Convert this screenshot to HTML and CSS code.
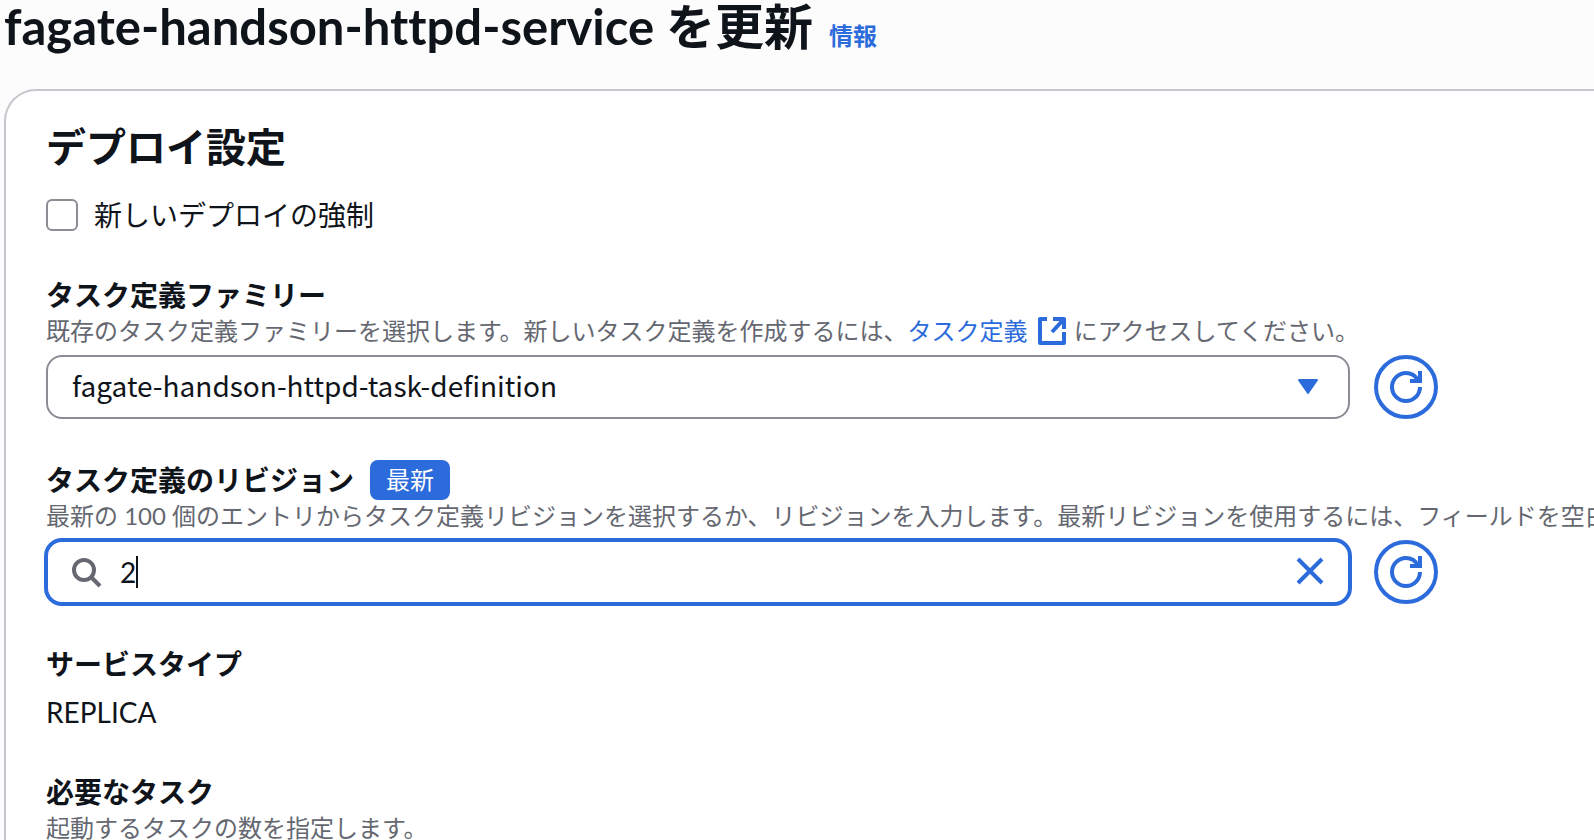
FILE: index.html
```html
<!DOCTYPE html>
<html lang="ja">
<head>
  <meta charset="utf-8">
  <meta name="viewport" content="width=device-width, initial-scale=1">
  <title>fagate-handson-httpd-service を更新</title>
  <link rel="stylesheet" href="styles.css">
</head>
<body>
  <header class="page-header">
    <h1 class="page-title">fagate-handson-httpd-service を更新</h1>
    <a class="info-link" href="#info">情報</a>
  </header>

  <main class="card">
    <h2 class="card-title">デプロイ設定</h2>

    <form class="form">
      <label class="check">
        <input class="check-box" type="checkbox">
        <span>新しいデプロイの強制</span>
      </label>

      <div class="field">
        <label class="field-label" for="family">タスク定義ファミリー</label>
        <p class="field-hint">既存のタスク定義ファミリーを選択します。新しいタスク定義を作成するには、<a class="link" href="#task-definitions">タスク定義<svg class="external-icon" viewBox="0 0 32 32" aria-hidden="true"><path d="M11 4H4v24h24V17M17 4h11v10M28 4L16 17" fill="none" stroke="currentColor" stroke-width="4" stroke-linejoin="round"/></svg></a> にアクセスしてください。</p>
        <div class="control-row">
          <div class="select-wrap">
            <select class="select" id="family">
              <option>fagate-handson-httpd-task-definition</option>
            </select>
            <svg class="select-arrow" viewBox="0 0 32 32" aria-hidden="true"><path d="M7 9h18l-9 13z" fill="currentColor" stroke="currentColor" stroke-width="2" stroke-linejoin="round"/></svg>
          </div>
          <button class="refresh" type="button" aria-label="ファミリーを再読み込み">
            <svg class="icon" viewBox="0 0 32 32" aria-hidden="true"><path d="M30 16A14 14 0 1 1 16 2C21 2 25 4 28 9M30 0v10H20" fill="none" stroke="currentColor" stroke-width="4"/></svg>
          </button>
        </div>
      </div>

      <div class="field">
        <div class="label-row">
          <label class="field-label" for="revision">タスク定義のリビジョン</label>
          <span class="badge">最新</span>
        </div>
        <p class="field-hint">最新の 100 個のエントリからタスク定義リビジョンを選択するか、リビジョンを入力します。最新リビジョンを使用するには、フィールドを空白のままにします。</p>
        <div class="control-row">
          <div class="search">
            <svg class="icon search-icon" viewBox="0 0 32 32" aria-hidden="true"><circle cx="12" cy="14" r="10" fill="none" stroke="currentColor" stroke-width="4"/><path d="M19 21l9 9" stroke="currentColor" stroke-width="4"/></svg>
            <div class="search-text">
              <input class="search-input" id="revision" type="text" value="2">
              <span class="caret"></span>
            </div>
            <button class="clear" type="button" aria-label="クリア">
              <svg class="icon" viewBox="0 0 32 32" aria-hidden="true"><path d="M4 3l24 24M28 3L4 27" fill="none" stroke="currentColor" stroke-width="4"/></svg>
            </button>
          </div>
          <button class="refresh" type="button" aria-label="リビジョンを再読み込み">
            <svg class="icon" viewBox="0 0 32 32" aria-hidden="true"><path d="M30 16A14 14 0 1 1 16 2C21 2 25 4 28 9M30 0v10H20" fill="none" stroke="currentColor" stroke-width="4"/></svg>
          </button>
        </div>
      </div>

      <div class="field">
        <div class="field-label">サービスタイプ</div>
        <div class="field-value">REPLICA</div>
      </div>

      <div class="field">
        <div class="field-label">必要なタスク</div>
        <p class="field-hint">起動するタスクの数を指定します。</p>
      </div>
    </form>
  </main>
</body>
</html>
```

FILE: styles.css
```css
:root {
  --text: #0f141a;
  --muted: #656871;
  --blue: #2c6bdb;
  --border: #c6c6cd;
  --control: #8c8c94;
}

* {
  box-sizing: border-box;
}

html {
  overflow: hidden;
}

body {
  margin: 0;
  padding-left: 4px;
  background: #fcfcfd;
  color: var(--text);
  font-family: Lato, "Noto Sans CJK JP", sans-serif;
  font-size: 28px;
  line-height: 40px;
}

h1,
h2,
p {
  margin: 0;
}

.page-header {
  display: flex;
  align-items: baseline;
  gap: 16px;
  margin-bottom: 36px;
  white-space: nowrap;
}

.page-title {
  font-size: 49px;
  line-height: 53px;
  font-weight: 700;
  font-variant-ligatures: none;
}

.info-link {
  color: var(--blue);
  font-size: 24px;
  line-height: 32px;
  font-weight: 700;
  text-decoration: none;
}

.card {
  padding: 32px 0 40px 40px;
  border: 2px solid var(--border);
  border-right: 0;
  border-radius: 32px 0 0 32px;
  background: #fff;
  overflow: hidden;
}

.card-title {
  margin-bottom: 24px;
  font-size: 40px;
  line-height: 48px;
  font-weight: 700;
}

.form {
  display: flex;
  flex-direction: column;
  gap: 40px;
}

.check {
  display: flex;
  align-items: center;
  gap: 16px;
}

.check-box {
  appearance: none;
  width: 32px;
  height: 32px;
  margin: 0;
  border: 2px solid var(--control);
  border-radius: 6px;
  background: #fff;
}

.field-label {
  display: block;
  font-weight: 700;
}

.label-row {
  display: flex;
  align-items: center;
  gap: 16px;
  padding-top: 1px;
}

.badge {
  padding: 0 16px;
  border-radius: 8px;
  background: var(--blue);
  color: #fff;
  font-size: 24px;
}

.field-hint {
  color: var(--muted);
  font-size: 24px;
  line-height: 32px;
  white-space: nowrap;
}

.field-value {
  margin-top: 8px;
}

.link {
  color: var(--blue);
  text-decoration: none;
}

.external-icon {
  width: 32px;
  height: 32px;
  margin: -8px 0 -8px 8px;
  vertical-align: 1px;
}

.control-row {
  display: flex;
  gap: 24px;
  max-width: 1392px;
  margin-top: 8px;
}

.select-wrap {
  position: relative;
  flex: 1;
}

.select {
  appearance: none;
  display: block;
  width: 100%;
  height: 64px;
  padding: 0 64px 4px 24px;
  border: 2px solid var(--control);
  border-radius: 16px;
  background: #fff;
  color: var(--text);
  font: inherit;
  font-family: "Noto Sans CJK JP", sans-serif;
}

.select-arrow {
  position: absolute;
  top: 16px;
  right: 26px;
  width: 32px;
  height: 32px;
  color: var(--blue);
  pointer-events: none;
}

.search {
  display: flex;
  flex: 1;
  align-items: center;
  gap: 16px;
  height: 68px;
  margin: -2px;
  padding: 0 22px 0 24px;
  border: 4px solid var(--blue);
  border-radius: 18px;
}

.search-icon {
  color: var(--muted);
}

.search-text {
  display: flex;
  flex: 1;
  align-items: center;
}

.search-input {
  field-sizing: content;
  padding: 0;
  border: 0;
  outline: 0;
  background: transparent;
  color: var(--text);
  font: inherit;
  caret-color: transparent;
}

.caret {
  width: 2px;
  height: 32px;
  background: var(--text);
}

.icon {
  display: block;
  flex: none;
  width: 32px;
  height: 32px;
}

.clear {
  padding: 0;
  border: 0;
  background: transparent;
  color: var(--blue);
}

.refresh {
  display: grid;
  flex: none;
  place-items: center;
  width: 64px;
  height: 64px;
  padding: 0;
  border: 4px solid var(--blue);
  border-radius: 50%;
  background: #fff;
  color: var(--blue);
}
```
